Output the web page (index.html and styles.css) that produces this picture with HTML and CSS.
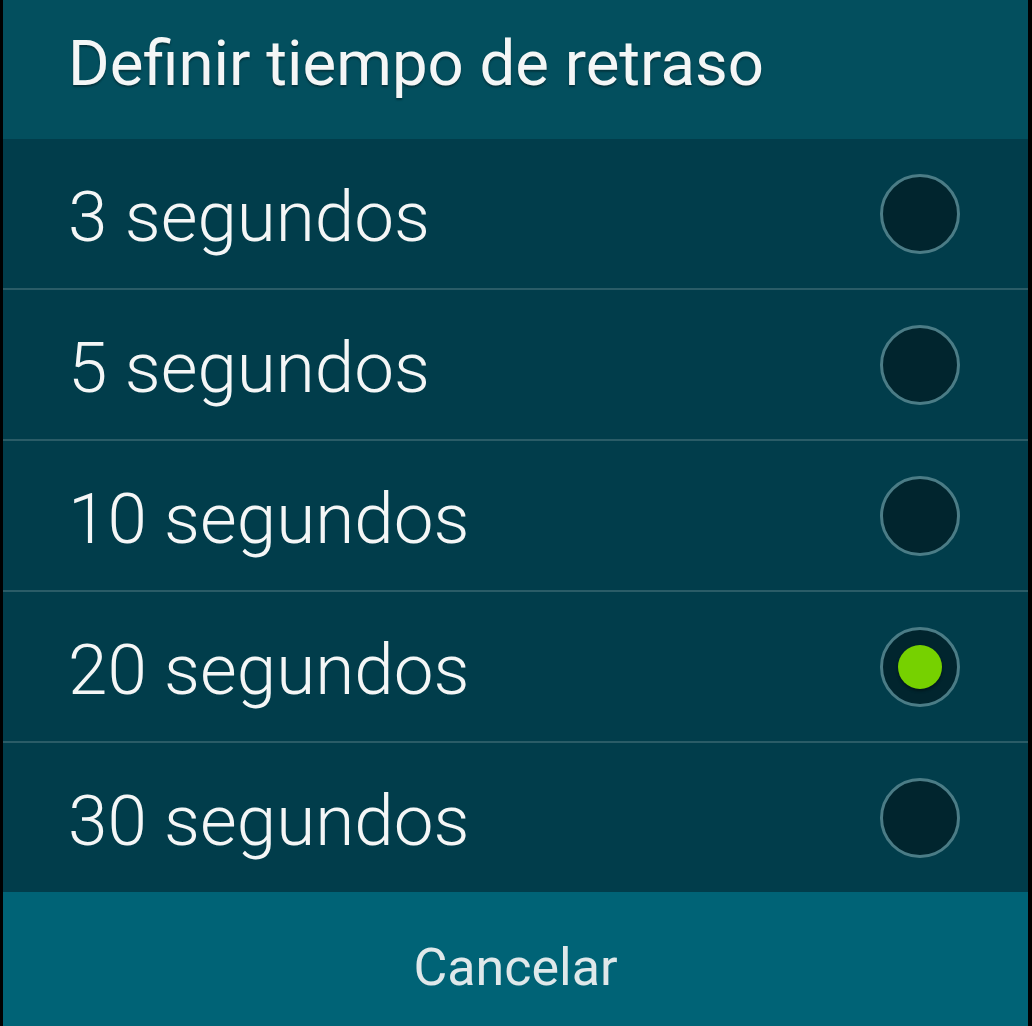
FILE: index.html
```html
<!DOCTYPE html>
<html lang="es">
<head>
<meta charset="utf-8">
<title>Definir tiempo de retraso</title>
<link rel="stylesheet" href="styles.css">
</head>
<body>
<div class="dialog">
  <div class="title">Definir tiempo de retraso</div>
  <ul class="options">
    <li class="option"><span class="label">3 segundos</span><span class="radio"></span></li>
    <li class="option"><span class="label">5 segundos</span><span class="radio"></span></li>
    <li class="option"><span class="label">10 segundos</span><span class="radio"></span></li>
    <li class="option"><span class="label">20 segundos</span><span class="radio checked"></span></li>
    <li class="option"><span class="label">30 segundos</span><span class="radio"></span></li>
  </ul>
  <div class="footer"><span class="cancel">Cancelar</span></div>
</div>
</body>
</html>
```

FILE: styles.css
```css
html, body {
  margin: 0;
  padding: 0;
  background: #000;
  height: 100%;
  overflow: hidden;
}
.dialog {
  margin: 0 4px 0 3px;
  height: 1026px;
  display: flex;
  flex-direction: column;
  font-family: Roboto, "Noto Sans", sans-serif;
  color: #f4f6f6;
}
.title {
  height: 139px;
  box-sizing: border-box;
  background: #034f5e;
  font-size: 63.5px;
  line-height: 1;
  padding: 32px 0 0 65px;
  text-shadow: 0 2px 2px rgba(0, 0, 0, 0.35);
}
.options {
  list-style: none;
  margin: 0;
  padding: 0;
  background: #013d4b;
}
.option {
  height: 149px;
  display: flex;
  align-items: center;
  justify-content: space-between;
  padding: 0 68px 0 65px;
  border-bottom: 2px solid #2a5c67;
}
.option:last-child {
  border-bottom: none;
}
.label {
  font-size: 71px;
  font-weight: 300;
  line-height: 1;
  margin-top: 6px;
}
.radio {
  width: 74px;
  height: 74px;
  border-radius: 50%;
  border: 3px solid #4b7c86;
  background: #01252e;
  display: flex;
  align-items: center;
  justify-content: center;
}
.radio.checked::after {
  content: "";
  width: 44px;
  height: 44px;
  border-radius: 50%;
  background: #76d100;
  box-shadow: 0 2px 3px rgba(0, 0, 0, 0.4);
}
.footer {
  flex: 1;
  background: #006376;
  display: flex;
  justify-content: center;
  padding-top: 50px;
}
.cancel {
  font-size: 52px;
  line-height: 1;
  color: #dfe8ea;
}
```
